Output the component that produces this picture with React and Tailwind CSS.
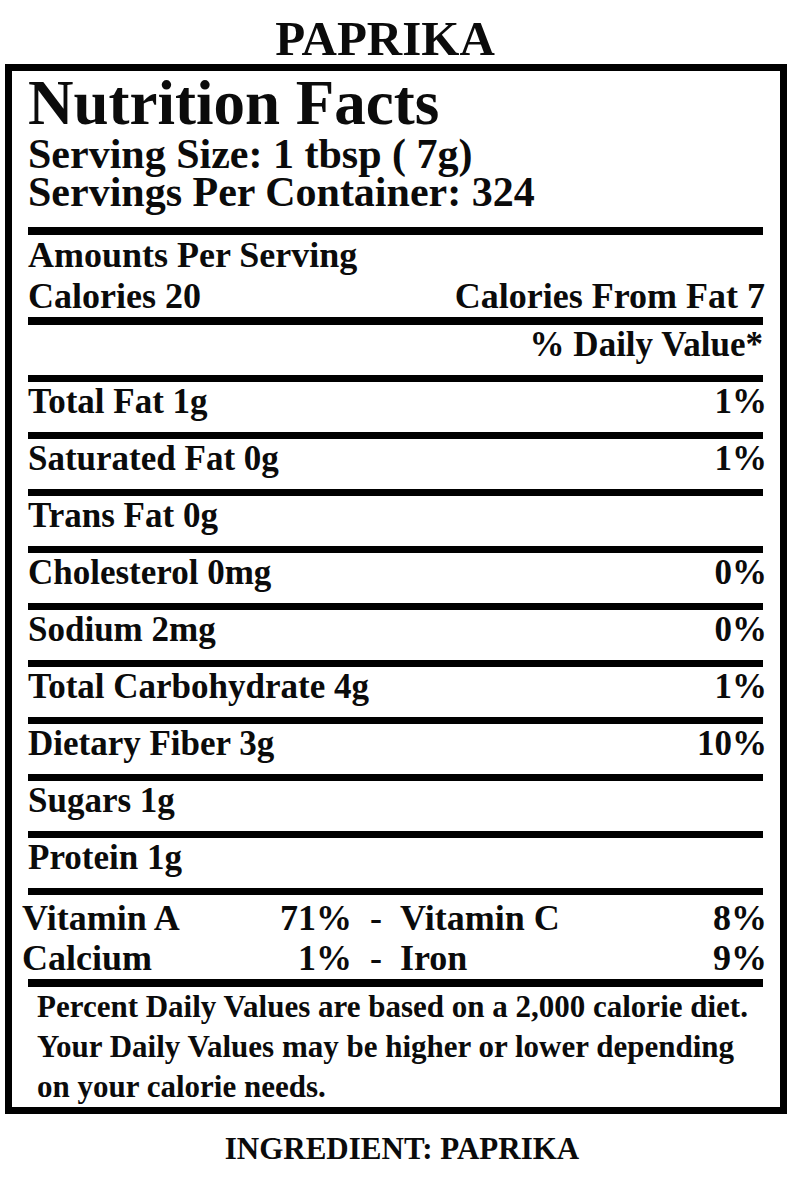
import React from "react";

const rows = [
    { label: "Total Fat 1g", pct: "1%" },
    { label: "Saturated Fat 0g", pct: "1%" },
    { label: "Trans Fat 0g", pct: "" },
    { label: "Cholesterol 0mg", pct: "0%" },
    { label: "Sodium 2mg", pct: "0%" },
    { label: "Total Carbohydrate 4g", pct: "1%" },
    { label: "Dietary Fiber 3g", pct: "10%" },
    { label: "Sugars 1g", pct: "" },
    { label: "Protein 1g", pct: "" },
];

function Rule({ thick }) {
    return <div className={thick ? "h-[8px] bg-black" : "h-[7px] bg-black"} />;
}

function App() {
    return (
        <div className="w-[796px] min-h-[1187px] bg-white text-[#0b0b0b] font-['Liberation_Serif',serif] font-bold">
            {/* Product name */}
            <div className="pt-[14px] pr-[26px] text-center text-[49px] leading-none">PAPRIKA</div>

            {/* Label box */}
            <div className="mt-[1px] ml-[5px] w-[782px] border-[7px] border-black pl-[16px] pr-[17px]">
                <div className="pt-[1px] text-[63px] leading-none">Nutrition Facts</div>
                <div className="text-[42px] leading-[38px]">Serving Size: 1 tbsp ( 7g)</div>
                <div className="text-[42px] leading-[38px]">Servings Per Container: 324</div>
                <div className="mt-[16px]">
                    <Rule thick />
                </div>

                <div className="text-[36px] leading-[41px]">
                    <div>Amounts Per Serving</div>
                    <div className="flex justify-between">
                        <span>Calories 20</span>
                        <span className="-mr-[2px]">Calories From Fat 7</span>
                    </div>
                </div>
                <Rule thick />

                <div className="h-[50px] flex justify-end text-[35px] leading-[40px]">
                    <span>% Daily Value*</span>
                </div>
                <Rule />

                {rows.map((row) => (
                    <div key={row.label}>
                        <div className="h-[50px] flex justify-between text-[35px] leading-[40px]">
                            <span>{row.label}</span>
                            <span className="-mr-[4px]">{row.pct}</span>
                        </div>
                        <Rule />
                    </div>
                ))}

                {/* Vitamins */}
                <div className="pt-[3px] h-[84px] -ml-[6px] -mr-[4px] text-[36px] leading-[40px]">
                    <div className="flex">
                        <div className="w-[330px] flex justify-between">
                            <span>Vitamin A</span>
                            <span>71%</span>
                        </div>
                        <div className="w-[48px] text-center">-</div>
                        <div className="flex-1 flex justify-between">
                            <span>Vitamin C</span>
                            <span>8%</span>
                        </div>
                    </div>
                    <div className="flex">
                        <div className="w-[330px] flex justify-between">
                            <span>Calcium</span>
                            <span>1%</span>
                        </div>
                        <div className="w-[48px] text-center">-</div>
                        <div className="flex-1 flex justify-between">
                            <span>Iron</span>
                            <span>9%</span>
                        </div>
                    </div>
                </div>
                <Rule thick />

                <div className="pl-[9px] text-[31px] leading-[40px]">
                    <p>Percent Daily Values are based on a 2,000 calorie diet.</p>
                    <p>Your Daily Values may be higher or lower depending</p>
                    <p>on your calorie needs.</p>
                </div>
            </div>

            <div className="mt-[19px] pl-[8px] text-center text-[31px] leading-none">INGREDIENT: PAPRIKA</div>
        </div>
    );
}

export default App;
